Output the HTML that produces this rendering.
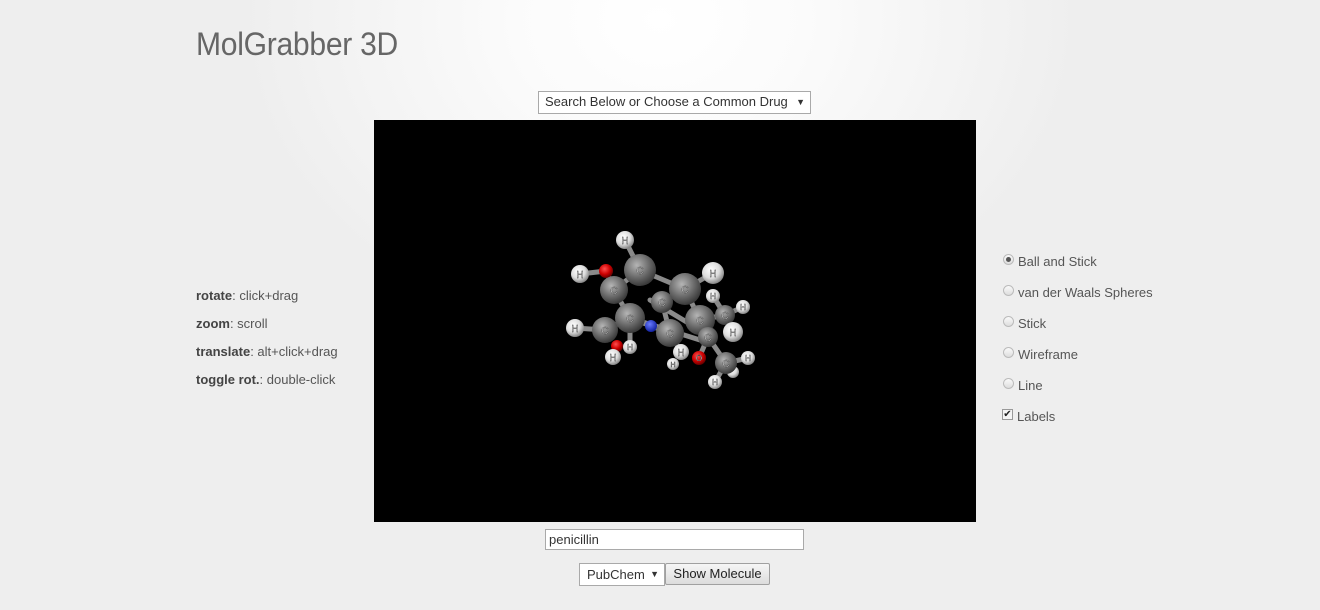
<!DOCTYPE html>
<html><head><style>
html,body{margin:0;padding:0}
body{width:1320px;height:610px;position:relative;overflow:hidden;font-family:"Liberation Sans",sans-serif;color:#555;font-size:14px;
background:radial-gradient(ellipse 420px 330px at 660px 20px,#fff 0%,#fbfbfb 35%,#eeeeee 100%) #eeeeee;}
.abs{position:absolute}
h1{position:absolute;left:196px;top:26px;margin:0;font-weight:normal;font-size:32px;color:#666;letter-spacing:-0.3px;transform:scaleX(0.94);transform-origin:left}
.sel{position:absolute;background:#fff;border:1px solid #a9a9a9;box-sizing:border-box;color:#333;font-size:13px;line-height:20px}
.hint{position:absolute;left:196px;font-size:13px;color:#555}
.hint b{color:#444}
.opt{position:absolute;left:1002px;font-size:13px;color:#555}
.rad{position:absolute;left:1003px;width:11px;height:11px;border-radius:50%;border:1px solid #bbb;box-sizing:border-box;background:linear-gradient(#fafafa,#ddd)}
</style></head><body>
<h1>MolGrabber 3D</h1>
<div class="sel" style="left:538px;top:91px;width:273px;height:23px;padding-left:6px">Search Below or Choose a Common Drug<span style="position:absolute;right:5px;top:0;font-size:9px">&#9660;</span></div>
<div class="abs" style="left:374px;top:120px;width:602px;height:402px;background:#000"></div>
<svg class="abs" style="left:374px;top:120px" width="602" height="402">
<defs>
<radialGradient id="c" cx="40%" cy="35%" r="65%"><stop offset="0" stop-color="#b5b5b5"/><stop offset=".6" stop-color="#6a6a6a"/><stop offset="1" stop-color="#3a3a3a"/></radialGradient>
<radialGradient id="h" cx="40%" cy="35%" r="65%"><stop offset="0" stop-color="#fff"/><stop offset=".6" stop-color="#ddd"/><stop offset="1" stop-color="#888"/></radialGradient>
<radialGradient id="o" cx="40%" cy="35%" r="65%"><stop offset="0" stop-color="#ff5050"/><stop offset=".6" stop-color="#c00"/><stop offset="1" stop-color="#600"/></radialGradient>
<radialGradient id="n" cx="40%" cy="35%" r="65%"><stop offset="0" stop-color="#6a7cff"/><stop offset="1" stop-color="#1020a0"/></radialGradient>
</defs>
<g transform="translate(-374,-120)" stroke="#8a8a8a" stroke-width="5" stroke-linecap="round">
<line x1="625" y1="240" x2="640" y2="270"/><line x1="640" y1="270" x2="685" y2="289"/><line x1="640" y1="270" x2="614" y2="290"/>
<line x1="580" y1="274" x2="606" y2="271"/><line x1="606" y1="271" x2="614" y2="290"/><line x1="614" y1="290" x2="630" y2="318"/>
<line x1="685" y1="289" x2="713" y2="273"/><line x1="685" y1="289" x2="700" y2="320"/><line x1="685" y1="289" x2="662" y2="302"/>
<line x1="630" y1="318" x2="700" y2="340"/><line x1="630" y1="318" x2="670" y2="333"/><line x1="605" y1="330" x2="575" y2="328"/>
<line x1="605" y1="330" x2="630" y2="318"/><line x1="700" y1="320" x2="725" y2="315"/><line x1="725" y1="315" x2="743" y2="307"/>
<line x1="725" y1="315" x2="713" y2="296"/><line x1="700" y1="320" x2="708" y2="337"/><line x1="708" y1="337" x2="726" y2="363"/>
<line x1="726" y1="363" x2="748" y2="358"/><line x1="726" y1="363" x2="715" y2="382"/><line x1="670" y1="333" x2="681" y2="352"/>
<line x1="662" y1="302" x2="670" y2="333"/><line x1="614" y1="357" x2="617" y2="346"/><line x1="630" y1="318" x2="630" y2="347"/>
<line x1="699" y1="358" x2="708" y2="337"/><line x1="650" y1="300" x2="700" y2="330"/>
</g>
<g transform="translate(-374,-120)" font-family="Liberation Sans,sans-serif" font-size="10" text-anchor="middle" fill="#fff" stroke="#333" stroke-width=".4">
<circle cx="625" cy="240" r="9" fill="url(#h)" stroke="none"/><text x="625" y="244">H</text>
<circle cx="606" cy="271" r="7" fill="url(#o)" stroke="none"/>
<circle cx="580" cy="274" r="9" fill="url(#h)" stroke="none"/><text x="580" y="278">H</text>
<circle cx="614" cy="290" r="14" fill="url(#c)" stroke="none"/><text x="614" y="294">C</text>
<circle cx="640" cy="270" r="16" fill="url(#c)" stroke="none"/><text x="640" y="274">C</text>
<circle cx="713" cy="273" r="11" fill="url(#h)" stroke="none"/><text x="713" y="277">H</text>
<circle cx="662" cy="302" r="11" fill="url(#c)" stroke="none"/><text x="662" y="306">C</text>
<circle cx="685" cy="289" r="16" fill="url(#c)" stroke="none"/><text x="685" y="293">C</text>
<circle cx="713" cy="296" r="7" fill="url(#h)" stroke="none"/><text x="713" y="299" font-size="8">H</text>
<circle cx="743" cy="307" r="7" fill="url(#h)" stroke="none"/><text x="743" y="310" font-size="8">H</text>
<circle cx="725" cy="315" r="10" fill="url(#c)" stroke="none"/><text x="725" y="319">C</text>
<circle cx="651" cy="326" r="6" fill="url(#n)" stroke="none"/>
<circle cx="700" cy="320" r="15" fill="url(#c)" stroke="none"/><text x="700" y="324">C</text>
<circle cx="605" cy="330" r="13" fill="url(#c)" stroke="none"/><text x="605" y="334">C</text>
<circle cx="575" cy="328" r="9" fill="url(#h)" stroke="none"/><text x="575" y="332">H</text>
<circle cx="617" cy="346" r="6" fill="url(#o)" stroke="none"/>
<circle cx="630" cy="318" r="15" fill="url(#c)" stroke="none"/><text x="630" y="322">C</text>
<circle cx="733" cy="332" r="10" fill="url(#h)" stroke="none"/><text x="733" y="336">H</text>
<circle cx="708" cy="337" r="10" fill="url(#c)" stroke="none"/><text x="708" y="341">C</text>
<circle cx="670" cy="333" r="14" fill="url(#c)" stroke="none"/><text x="670" y="337">C</text>
<circle cx="630" cy="347" r="7" fill="url(#h)" stroke="none"/><text x="630" y="350" font-size="8">H</text>
<circle cx="613" cy="357" r="8" fill="url(#h)" stroke="none"/><text x="613" y="361">H</text>
<circle cx="681" cy="352" r="8" fill="url(#h)" stroke="none"/><text x="681" y="356">H</text>
<circle cx="673" cy="364" r="6" fill="url(#h)" stroke="none"/><text x="673" y="367" font-size="7">H</text>
<circle cx="699" cy="358" r="7" fill="url(#o)" stroke="none"/><text x="699" y="361" font-size="8">O</text>
<circle cx="733" cy="372" r="6" fill="url(#h)" stroke="none"/>
<circle cx="726" cy="363" r="11" fill="url(#c)" stroke="none"/><text x="726" y="367">C</text>
<circle cx="748" cy="358" r="7" fill="url(#h)" stroke="none"/><text x="748" y="361" font-size="8">H</text>
<circle cx="715" cy="382" r="7" fill="url(#h)" stroke="none"/><text x="715" y="385" font-size="8">H</text>
</g>
</svg>
<div class="hint" style="top:288px"><b>rotate</b>: click+drag</div>
<div class="hint" style="top:316px"><b>zoom</b>: scroll</div>
<div class="hint" style="top:344px"><b>translate</b>: alt+click+drag</div>
<div class="hint" style="top:372px"><b>toggle rot.</b>: double-click</div>
<div class="rad" style="top:254px"><div style="width:5px;height:5px;border-radius:50%;background:#555;margin:2px"></div></div>
<div class="opt" style="left:1018px;top:254px">Ball and Stick</div>
<div class="rad" style="top:285px"></div><div class="opt" style="left:1018px;top:285px">van der Waals Spheres</div>
<div class="rad" style="top:316px"></div><div class="opt" style="left:1018px;top:316px">Stick</div>
<div class="rad" style="top:347px"></div><div class="opt" style="left:1018px;top:347px">Wireframe</div>
<div class="rad" style="top:378px"></div><div class="opt" style="left:1018px;top:378px">Line</div>
<div class="abs" style="left:1002px;top:409px;width:11px;height:11px;border:1px solid #999;box-sizing:border-box;background:#f4f4f4;font-size:10px;line-height:9px;color:#222;text-align:center">&#10004;</div>
<div class="opt" style="left:1017px;top:409px">Labels</div>
<div class="sel" style="left:545px;top:529px;width:259px;height:21px;padding-left:3px;line-height:19px">penicillin</div>
<div class="sel" style="left:579px;top:563px;width:86px;height:23px;padding-left:7px;line-height:21px">PubChem<span style="position:absolute;right:5px;top:0;font-size:9px">&#9660;</span></div>
<div class="abs" style="left:665px;top:563px;width:105px;height:22px;box-sizing:border-box;border:1px solid #a0a0a0;border-radius:2px;background:linear-gradient(#f6f6f6,#dcdcdc);font-size:13px;color:#222;text-align:center;line-height:20px">Show Molecule</div>
</body></html>
